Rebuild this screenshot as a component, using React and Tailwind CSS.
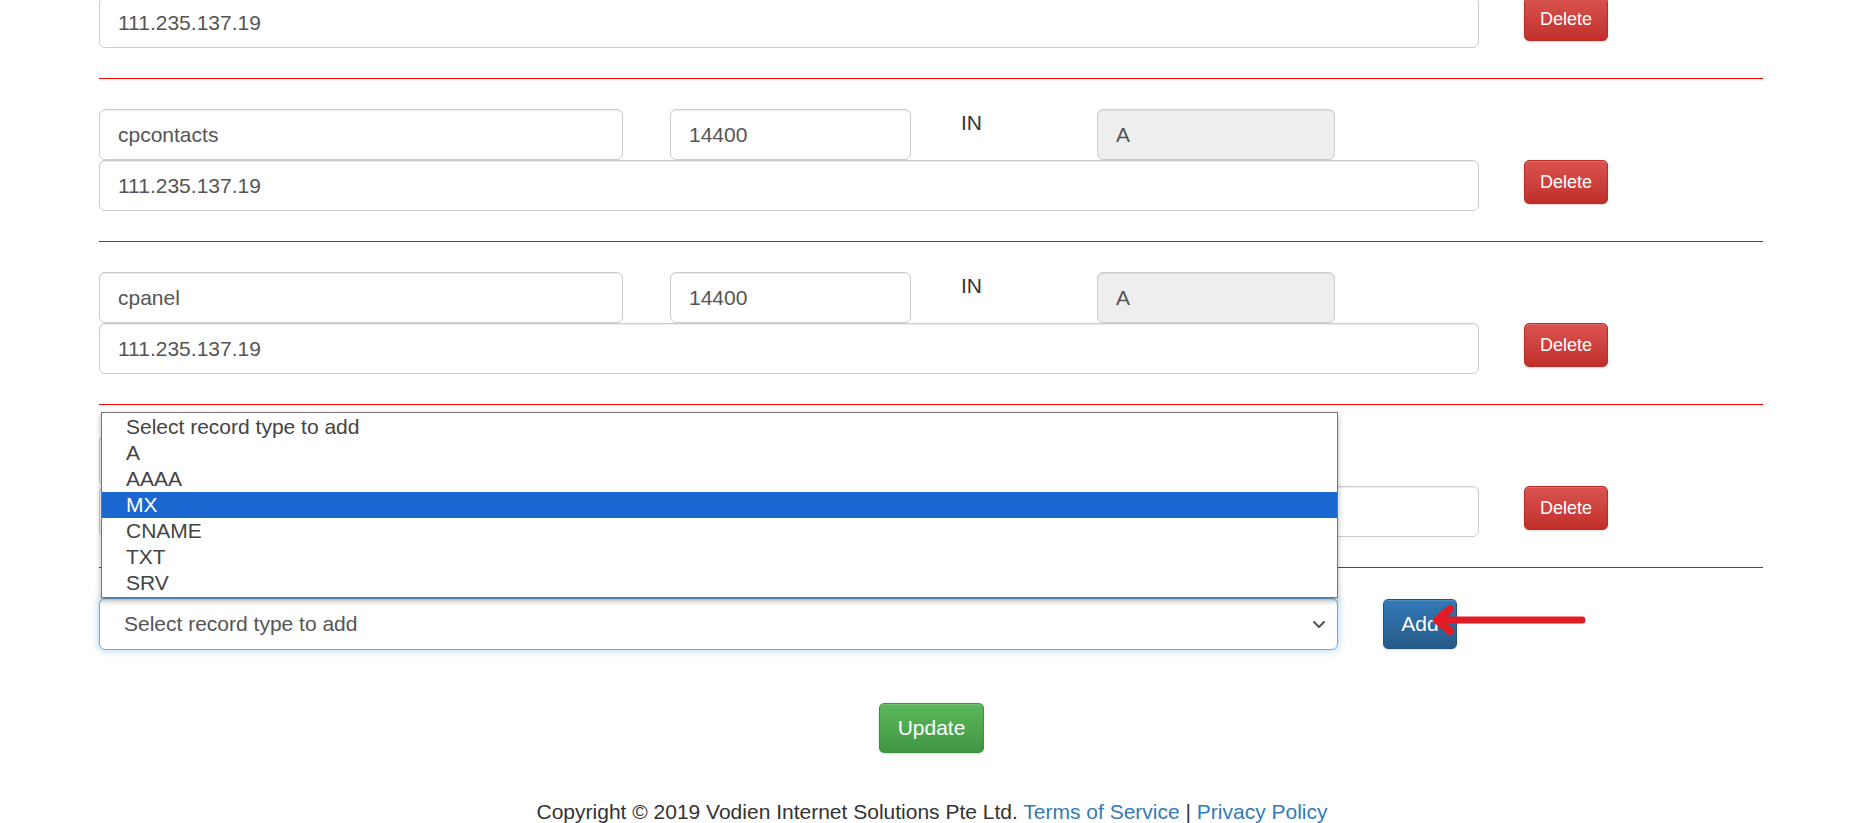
import React from 'react';

const records = [
    { name: 'cpcalendars', ttl: '14400', type: 'A', value: '111.235.137.19' },
    { name: 'cpcontacts', ttl: '14400', type: 'A', value: '111.235.137.19' },
    { name: 'cpanel', ttl: '14400', type: 'A', value: '111.235.137.19' },
    { name: 'webdisk', ttl: '14400', type: 'A', value: '111.235.137.19' },
];

const recordTypes = ['Select record type to add', 'A', 'AAAA', 'MX', 'CNAME', 'TXT', 'SRV'];

const inputCls = 'h-[51px] flex items-center pl-[18px] border border-[#ccc] rounded-[6px] text-[21px] text-[#555] shadow-[inset_0_1px_1px_rgba(0,0,0,0.075)]';

const RecordRow = ({ record }) => (
    <div className="flex items-start border-b border-[#ff0000] pt-[30px] pb-[30px]">
        <div className="w-[1380px] flex flex-col">
            <div className="flex items-start">
                <div className={`${inputCls} w-[524px] bg-white`}>{record.name}</div>
                <div className={`${inputCls} w-[241px] ml-[47px] bg-white`}>{record.ttl}</div>
                <div className="ml-[50px] w-[136px] text-[21px] leading-[28px] text-[#333]">IN</div>
                <div className={`${inputCls} w-[238px] bg-[#eee]`}>{record.type}</div>
            </div>
            <div className={`${inputCls} w-full bg-white`}>{record.value}</div>
        </div>
        <button className="ml-[45px] mt-[51px] w-[84px] h-[44px] rounded-[5px] border border-[#b92c28] bg-linear-to-b from-[#d9534f] to-[#c12e2a] text-white text-[18px] shadow-[inset_0_1px_0_rgba(255,255,255,0.15),0_1px_2px_rgba(0,0,0,0.15)]">
            Delete
        </button>
    </div>
);

const App = () => {
    return (
        <div className="w-[1874px] h-[823px] overflow-hidden bg-white font-['Liberation_Sans',Arial,sans-serif]">
            <div className="ml-[99px] w-[1664px] -mt-[84px]">
                {records.map((r) => (
                    <RecordRow key={r.name} record={r} />
                ))}

                <div className="relative flex items-center pt-[30px]">
                    <div className="relative w-[1239px]">
                        {/* open native-style list */}
                        <div className="absolute left-[2px] right-0 bottom-[52px] bg-white border border-[#767676] shadow-[0_3px_6px_rgba(0,0,0,0.3)] py-[1px] z-10">
                            {recordTypes.map((t) => (
                                <div
                                    key={t}
                                    className={`h-[26px] leading-[26px] pl-[24px] text-[21px] ${t === 'MX' ? 'bg-[#1a67d2] text-white' : 'text-[#444]'}`}
                                >
                                    {t}
                                </div>
                            ))}
                        </div>
                        <div className="h-[52px] flex items-center justify-between pl-[24px] pr-[10px] border border-[#66afe9] rounded-[6px] text-[21px] text-[#555] bg-white shadow-[inset_0_1px_1px_rgba(0,0,0,0.075),0_0_8px_rgba(102,175,233,0.6)]">
                            <span>Select record type to add</span>
                            <svg width="16" height="16" viewBox="0 0 16 16" fill="none">
                                <path d="M3 6l5 5 5-5" stroke="#555" strokeWidth="2" strokeLinecap="round" strokeLinejoin="round" />
                            </svg>
                        </div>
                    </div>
                    <button className="ml-[45px] w-[74px] h-[50px] rounded-[5px] border border-[#245580] bg-linear-to-b from-[#337ab7] to-[#265a88] text-white text-[21px] shadow-[inset_0_1px_0_rgba(255,255,255,0.15),0_1px_2px_rgba(0,0,0,0.15)]">
                        Add
                    </button>
                    <svg className="absolute left-[1331px] top-[37px]" width="160" height="30" viewBox="0 0 160 30" fill="none">
                        <path d="M10 15H152" stroke="#e31b23" strokeWidth="7" strokeLinecap="round" />
                        <path d="M20 4L7 15L20 26" stroke="#e31b23" strokeWidth="8" strokeLinecap="round" strokeLinejoin="round" />
                    </svg>
                </div>
            </div>

            <div className="flex mt-[53px] ml-[879px]">
                <button className="w-[105px] h-[50px] rounded-[5px] border border-[#3e8f3e] bg-linear-to-b from-[#5cb85c] to-[#419641] text-white text-[21px] shadow-[inset_0_1px_0_rgba(255,255,255,0.15),0_1px_2px_rgba(0,0,0,0.15)]">
                    Update
                </button>
            </div>

            <div className="mt-[45px] pr-[10px] text-center text-[21px] leading-[28px] text-[#333]">
                Copyright © 2019 Vodien Internet Solutions Pte Ltd.{' '}
                <span className="text-[#337ab7]">Terms of Service</span> | <span className="text-[#337ab7]">Privacy Policy</span>
            </div>
        </div>
    );
};

export default App;
